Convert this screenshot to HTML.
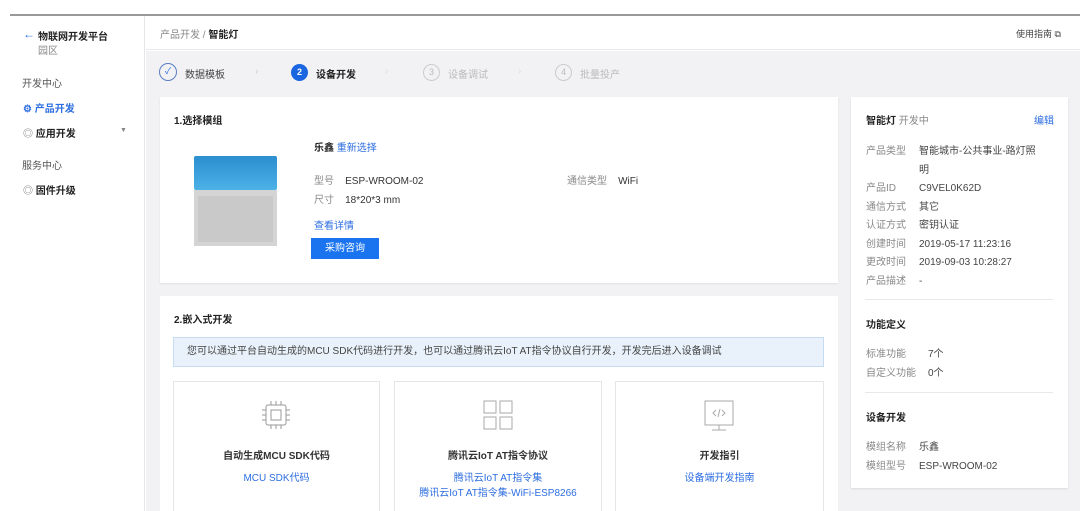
<!DOCTYPE html>
<html><head><meta charset="utf-8"><style>
*{margin:0;padding:0;box-sizing:border-box}
body{width:1080px;height:511px;overflow:hidden;background:#fff;font-family:"Liberation Sans","Noto Sans CJK SC",sans-serif;font-size:10px;color:#333;position:relative}
.a{position:absolute}
.blue{color:#2d6ee0}
.g{color:#888}
.b{font-weight:bold;color:#222}
</style></head><body>
<div class="a" style="left:10px;top:14px;width:1070px;height:2px;background:#999"></div>
<!-- sidebar -->
<div class="a" style="left:10px;top:16px;width:135px;height:495px;background:#fff;border-right:1px solid #e6e6e6"></div>
<div class="a blue" style="left:23px;top:27px;font-size:12px">←</div>
<div class="a b" style="left:38px;top:28px;font-size:10px">物联网开发平台</div>
<div class="a g" style="left:38px;top:42px">园区</div>
<div class="a" style="left:22px;top:75px;color:#555">开发中心</div>
<div class="a blue" style="left:23px;top:100px;font-weight:bold">⚙ 产品开发</div>
<div class="a b" style="left:23px;top:125px"><span style="color:#888">◎</span> 应用开发</div>
<div class="a g" style="left:120px;top:127px;font-size:7px">▼</div>
<div class="a" style="left:22px;top:157px;color:#555">服务中心</div>
<div class="a b" style="left:23px;top:182px"><span style="color:#888">◎</span> 固件升级</div>
<!-- header -->
<div class="a" style="left:146px;top:16px;width:934px;height:34px;background:#fff;border-bottom:1px solid #e8e8e8"></div>
<div class="a" style="left:160px;top:26px"><span class="g">产品开发</span> <span class="g">/</span> <span class="b">智能灯</span></div>
<div class="a" style="left:1016px;top:27px;font-size:9px;color:#444">使用指南 ⧉</div>
<!-- content bg -->
<div class="a" style="left:146px;top:51px;width:934px;height:460px;background:#f2f2f4"></div>
<!-- steps -->
<div class="a" style="left:159px;top:63px;width:18px;height:18px;border:1.5px solid #5b7fc4;border-radius:50%;color:#2d6ee0;text-align:center;line-height:15px;font-size:9px">✓</div>
<div class="a" style="left:185px;top:66px;color:#444">数据模板</div>
<div class="a" style="left:255px;top:66px;color:#ccc">›</div>
<div class="a" style="left:291px;top:64px;width:17px;height:17px;background:#1a66e0;border-radius:50%;color:#fff;text-align:center;line-height:17px;font-weight:bold;font-size:9px">2</div>
<div class="a b" style="left:316px;top:66px">设备开发</div>
<div class="a" style="left:385px;top:66px;color:#ddd">›</div>
<div class="a" style="left:423px;top:64px;width:17px;height:17px;border:1px solid #ccc;border-radius:50%;color:#bbb;text-align:center;line-height:15px;font-size:9px">3</div>
<div class="a" style="left:448px;top:66px;color:#bbb">设备调试</div>
<div class="a" style="left:518px;top:66px;color:#ddd">›</div>
<div class="a" style="left:555px;top:64px;width:17px;height:17px;border:1px solid #ccc;border-radius:50%;color:#bbb;text-align:center;line-height:15px;font-size:9px">4</div>
<div class="a" style="left:580px;top:66px;color:#bbb">批量投产</div>
<!-- card 1 -->
<div class="a" style="left:160px;top:97px;width:678px;height:186px;background:#fff;box-shadow:0 1px 2px rgba(0,0,0,.08)"></div>
<div class="a b" style="left:174px;top:112px">1.选择模组</div>
<div class="a" style="left:194px;top:156px;width:83px;height:34px;background:linear-gradient(#2a8ed0,#4cb2e6);border-radius:2px"></div>
<div class="a" style="left:194px;top:190px;width:83px;height:56px;background:#d4d4d4"></div>
<div class="a" style="left:198px;top:196px;width:75px;height:46px;background:#c9c9c9"></div>
<div class="a b" style="left:314px;top:139px">乐鑫 <span class="blue" style="font-weight:normal">重新选择</span></div>
<div class="a" style="left:314px;top:172px"><span class="g">型号</span>&nbsp;&nbsp;&nbsp;&nbsp;ESP-WROOM-02</div>
<div class="a" style="left:314px;top:191px"><span class="g">尺寸</span>&nbsp;&nbsp;&nbsp;&nbsp;18*20*3 mm</div>
<div class="a" style="left:567px;top:172px"><span class="g">通信类型</span>&nbsp;&nbsp;&nbsp;&nbsp;WiFi</div>
<div class="a blue" style="left:314px;top:217px">查看详情</div>
<div class="a" style="left:311px;top:238px;width:68px;height:21px;background:#1a74ef;color:#fff;text-align:center;line-height:21px">采购咨询</div>
<!-- card 2 -->
<div class="a" style="left:160px;top:296px;width:678px;height:215px;background:#fff"></div>
<div class="a b" style="left:174px;top:311px">2.嵌入式开发</div>
<div class="a" style="left:173px;top:337px;width:651px;height:30px;background:#e9f2fb;border:1px solid #c6dcf2;line-height:28px;padding-left:13px;color:#444">您可以通过平台自动生成的MCU SDK代码进行开发，也可以通过腾讯云IoT AT指令协议自行开发，开发完后进入设备调试</div>
<div class="a" style="left:173px;top:381px;width:207px;height:130px;border:1px solid #e6e6e6;border-bottom:none"></div>
<div class="a" style="left:394px;top:381px;width:208px;height:130px;border:1px solid #e6e6e6;border-bottom:none"></div>
<div class="a" style="left:615px;top:381px;width:209px;height:130px;border:1px solid #e6e6e6;border-bottom:none"></div>
<svg class="a" style="left:258px;top:397px" width="36" height="36" viewBox="0 0 36 36" fill="none" stroke="#999" stroke-width="1"><rect x="8" y="8" width="20" height="20" rx="2"/><rect x="13" y="13" width="10" height="10"/><path d="M13 4v4M18 4v4M23 4v4M13 28v4M18 28v4M23 28v4M4 13h4M4 18h4M4 23h4M28 13h4M28 18h4M28 23h4"/></svg>
<svg class="a" style="left:481px;top:398px" width="34" height="34" viewBox="0 0 34 34" fill="none" stroke="#aaa" stroke-width="1"><rect x="3" y="3" width="12" height="12"/><rect x="19" y="3" width="12" height="12"/><rect x="3" y="19" width="12" height="12"/><rect x="19" y="19" width="12" height="12"/></svg>
<svg class="a" style="left:702px;top:399px" width="34" height="34" viewBox="0 0 34 34" fill="none" stroke="#aaa" stroke-width="1"><rect x="3" y="2" width="28" height="24"/><path d="M17 26v5M10 31h14M14 11l-3 3 3 3M20 11l3 3-3 3M18 10l-2 8"/></svg>
<div class="a b" style="left:173px;top:447px;width:207px;text-align:center;color:#333">自动生成MCU SDK代码</div>
<div class="a blue" style="left:173px;top:469px;width:207px;text-align:center">MCU SDK代码</div>
<div class="a b" style="left:394px;top:447px;width:208px;text-align:center;color:#333">腾讯云IoT AT指令协议</div>
<div class="a blue" style="left:394px;top:469px;width:208px;text-align:center">腾讯云IoT AT指令集</div>
<div class="a blue" style="left:394px;top:484px;width:208px;text-align:center">腾讯云IoT AT指令集-WiFi-ESP8266</div>
<div class="a b" style="left:615px;top:447px;width:209px;text-align:center;color:#333">开发指引</div>
<div class="a blue" style="left:615px;top:469px;width:209px;text-align:center">设备端开发指南</div>
<!-- right card -->
<div class="a" style="left:851px;top:97px;width:217px;height:391px;background:#fff;box-shadow:0 1px 2px rgba(0,0,0,.1)"></div>
<div class="a" style="left:866px;top:112px"><span class="b">智能灯</span> <span class="g">开发中</span></div>
<div class="a blue" style="left:1034px;top:112px">编辑</div>
<div class="a" style="left:866px;top:143px;line-height:18.5px;color:#444">
<div><span class="g" style="display:inline-block;width:53px">产品类型</span>智能城市-公共事业-路灯照</div>
<div style="margin-left:53px">明</div>
<div><span class="g" style="display:inline-block;width:53px">产品ID</span>C9VEL0K62D</div>
<div><span class="g" style="display:inline-block;width:53px">通信方式</span>其它</div>
<div><span class="g" style="display:inline-block;width:53px">认证方式</span>密钥认证</div>
<div><span class="g" style="display:inline-block;width:53px">创建时间</span>2019-05-17 11:23:16</div>
<div><span class="g" style="display:inline-block;width:53px">更改时间</span>2019-09-03 10:28:27</div>
<div><span class="g" style="display:inline-block;width:53px">产品描述</span>-</div>
</div>
<div class="a" style="left:865px;top:299px;width:188px;height:1px;background:#e8e8e8"></div>
<div class="a b" style="left:866px;top:316px">功能定义</div>
<div class="a" style="left:866px;top:346px;line-height:18.5px;color:#444">
<div><span class="g" style="display:inline-block;width:62px">标准功能</span>7个</div>
<div><span class="g" style="display:inline-block;width:62px">自定义功能</span>0个</div>
</div>
<div class="a" style="left:865px;top:392px;width:188px;height:1px;background:#e8e8e8"></div>
<div class="a b" style="left:866px;top:409px">设备开发</div>
<div class="a" style="left:866px;top:439px;line-height:18.5px;color:#444">
<div><span class="g" style="display:inline-block;width:53px">模组名称</span>乐鑫</div>
<div><span class="g" style="display:inline-block;width:53px">模组型号</span>ESP-WROOM-02</div>
</div>
</body></html>
